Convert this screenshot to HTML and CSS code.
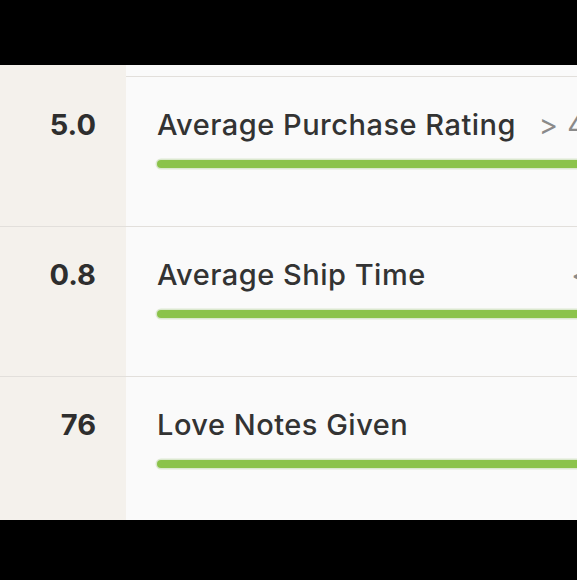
FILE: index.html
```
<!DOCTYPE html>
<html>
<head>
<meta charset="utf-8">
<link rel="stylesheet" href="styles.css">
</head>
<body>
<div class="panel">
  <div class="row row-tail">
    <div class="num-cell"></div>
    <div class="main-cell"></div>
  </div>
  <div class="row">
    <div class="num-cell"><span class="num">5.0</span></div>
    <div class="main-cell">
      <div class="label-line">
        <span class="label">Average Purchase Rating</span>
        <span class="target">&gt; 4.5</span>
      </div>
      <div class="bar"></div>
    </div>
  </div>
  <div class="row">
    <div class="num-cell"><span class="num">0.8</span></div>
    <div class="main-cell">
      <div class="label-line">
        <span class="label">Average Ship Time</span>
        <span class="target">&lt; 1</span>
      </div>
      <div class="bar"></div>
    </div>
  </div>
  <div class="row">
    <div class="num-cell"><span class="num">76</span></div>
    <div class="main-cell">
      <div class="label-line">
        <span class="label">Love Notes Given</span>
        <span class="target"></span>
      </div>
      <div class="bar"></div>
    </div>
  </div>
</div>
</body>
</html>
```
FILE: styles.css
```
html, body {
  margin: 0;
  padding: 0;
  background: #000;
  overflow: hidden;
}
body {
  width: 577px;
  height: 580px;
  font-family: "Inter", "Open Sans", sans-serif;
}
.panel {
  margin-top: 65px;
  height: 455px;
  width: 577px;
  overflow: hidden;
  background: #fafafa;
}
.row {
  display: grid;
  grid-template-columns: 126px 700px;
  height: 149px;
  border-top: 1px solid #e2dfdb;
}
.row-tail {
  height: 11px;
  border-top: none;
}
.num-cell {
  background: #f4f1ec;
  text-align: right;
  padding-right: 30px;
  padding-top: 29px;
}
.num {
  font-size: 29px;
  font-weight: 700;
  color: #2e2e2e;
  line-height: 38px;
}
.main-cell {
  padding-left: 31px;
  padding-top: 29px;
}
.label-line {
  display: flex;
  justify-content: space-between;
  width: 455px;
  height: 38px;
  line-height: 38px;
  font-size: 29px;
  font-weight: 500;
  letter-spacing: 0.5px;
}
.label {
  color: #333;
}
.target {
  color: #8a8a8a;
  font-weight: 400;
}
.bar {
  margin-top: 16px;
  height: 8px;
  width: 700px;
  background: #8bc34a;
  border-radius: 5px 0 0 5px;
  box-shadow: 0 0 0 1.5px #dbe8cf;
}
```
